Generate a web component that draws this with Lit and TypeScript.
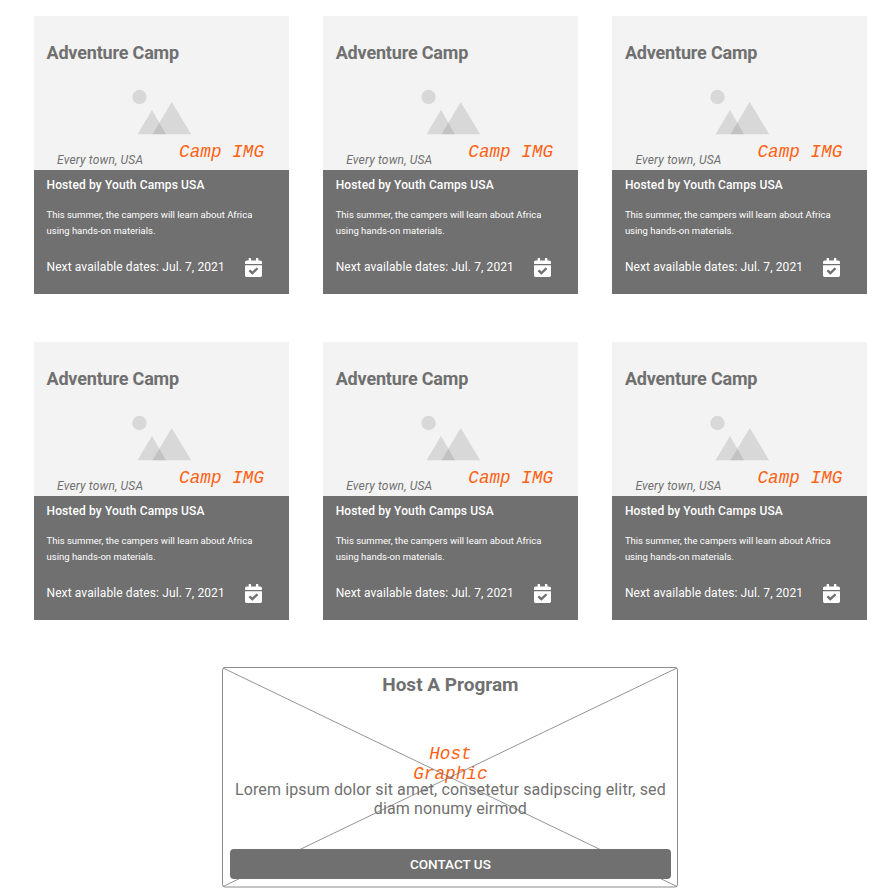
import { LitElement, html, css } from "lit";
import { customElement, property } from "lit/decorators.js";

interface Camp {
  name: string;
  town: string;
  host: string;
  summary: string;
  nextDate: string;
}

const camps: Camp[] = Array.from({ length: 6 }, () => ({
  name: "Adventure Camp",
  town: "Every town, USA",
  host: "Hosted by Youth Camps USA",
  summary: "This summer, the campers will learn about Africa using hands-on materials.",
  nextDate: "Jul. 7, 2021",
}));

@customElement("camp-card")
export class CampCard extends LitElement {
  @property({ attribute: false }) camp!: Camp;

  static styles = css`
    :host {
      display: flex;
      flex-direction: column;
      height: 278px;
      color: #fff;
    }
    .cover {
      box-sizing: border-box;
      height: 154.4px;
      padding: 26px 12.5px 0;
      background: #f3f3f3;
      color: #707070;
    }
    .name {
      margin: 0;
      font-size: 18px;
      line-height: 22px;
      font-weight: 700;
      letter-spacing: -0.18px;
    }
    .picture {
      display: block;
      width: 60px;
      height: 46px;
      margin: 25px 0 0 85.5px;
    }
    .caption {
      display: flex;
      align-items: flex-start;
      justify-content: space-between;
      padding: 7px 12.5px 0 10.5px;
      white-space: nowrap;
    }
    .town {
      margin-top: 10px;
      font-size: 12px;
      line-height: 16px;
      font-style: italic;
      letter-spacing: 0.18px;
    }
    .label {
      font: italic 17.7px/20px "Courier New", "Liberation Mono", monospace;
      color: #ff6213;
    }
    .details {
      box-sizing: border-box;
      flex: 1;
      padding: 6.6px 12.5px 0;
      background: #707070;
    }
    .host {
      margin: 0;
      font-size: 12px;
      line-height: 16px;
      font-weight: 500;
      letter-spacing: 0.12px;
    }
    .summary {
      margin: 13.9px 0 0;
      width: 215px;
      font-size: 9.5px;
      line-height: 16px;
    }
    .dates {
      display: flex;
      align-items: center;
      justify-content: space-between;
      margin: 18px 14.5px 0 0;
      font-size: 12px;
      line-height: 21px;
      letter-spacing: 0.1px;
      white-space: nowrap;
    }
    .calendar {
      display: block;
      width: 17px;
      height: 19px;
    }
  `;

  render() {
    return html`
      <section class="cover">
        <h2 class="name">${this.camp.name}</h2>
        <svg class="picture" viewBox="0 0 60 46" fill="#707070">
          <circle cx="7.5" cy="8" r="7.2" fill-opacity=".2" />
          <path d="M5.5 45.2 20 21 34 45.2Z" fill-opacity=".2" />
          <path d="M20.5 45.2 39.7 13 59.2 45.2Z" fill-opacity=".2" />
        </svg>
        <div class="caption">
          <span class="town">${this.camp.town}</span>
          <span class="label">Camp IMG</span>
        </div>
      </section>
      <section class="details">
        <h3 class="host">${this.camp.host}</h3>
        <p class="summary">${this.camp.summary}</p>
        <div class="dates">
          <span>Next available dates: ${this.camp.nextDate}</span>
          <svg class="calendar" viewBox="0 0 448 512" preserveAspectRatio="none" fill="#fff">
            <path
              d="M436 160H12c-6.627 0-12-5.373-12-12v-36c0-26.510 21.490-48 48-48h48V12c0-6.627 5.373-12 12-12h40c6.627 0 12 5.373 12 12v52h128V12c0-6.627 5.373-12 12-12h40c6.627 0 12 5.373 12 12v52h48c26.510 0 48 21.490 48 48v36c0 6.627-5.373 12-12 12zM12 192h424c6.627 0 12 5.373 12 12v260c0 26.510-21.490 48-48 48H48c-26.510 0-48-21.490-48-48V204c0-6.627 5.373-12 12-12zm333.296 95.947-28.169-28.398c-4.667-4.705-12.265-4.736-16.970-.068L194.120 364.665l-45.980-46.352c-4.667-4.705-12.266-4.736-16.971-.068l-28.397 28.170c-4.705 4.667-4.736 12.265-.068 16.970l82.601 83.269c4.667 4.705 12.265 4.736 16.970.068l142.953-141.805c4.705-4.667 4.736-12.265.068-16.970z"
            />
          </svg>
        </div>
      </section>
    `;
  }
}

@customElement("host-panel")
export class HostPanel extends LitElement {
  static styles = css`
    :host {
      position: relative;
      box-sizing: border-box;
      display: flex;
      flex-direction: column;
      width: 456px;
      height: 220.5px;
      padding: 7px 7.5px 9px;
      color: #707070;
      text-align: center;
    }
    .cross {
      position: absolute;
      inset: 0;
      width: 100%;
      height: 100%;
    }
    .title {
      margin: 0;
      font-size: 19px;
      line-height: 22px;
      font-weight: 700;
    }
    .label {
      width: 80px;
      margin: 48px auto 0;
      font: italic 17.7px/20px "Courier New", "Liberation Mono", monospace;
      color: #ff6213;
    }
    .text {
      margin: -4px -2px 0;
      font-size: 16px;
      line-height: 19px;
      letter-spacing: 0.13px;
    }
    .contact {
      position: relative;
      height: 29.5px;
      margin: auto 0 0;
      border: 0;
      border-radius: 4px;
      background: #707070;
      color: #fff;
      font: 500 13.5px/29px Roboto, sans-serif;
      padding: 0;
    }
  `;

  render() {
    return html`
      <svg class="cross" viewBox="0 0 456 221" preserveAspectRatio="none" fill="none" stroke="#707070">
        <rect x=".5" y=".5" width="455" height="220" rx="2.5" stroke-width=".8" />
        <path d="M1 1 455 220M455 1 1 220" stroke-width=".75" />
      </svg>
      <h2 class="title">Host A Program</h2>
      <div class="label">Host Graphic</div>
      <p class="text">Lorem ipsum dolor sit amet, consetetur sadipscing elitr, sed diam nonumy eirmod</p>
      <button class="contact">CONTACT US</button>
    `;
  }
}

@customElement("app-root")
export class AppRoot extends LitElement {
  static styles = css`
    :host {
      box-sizing: border-box;
      display: block;
      height: 894px;
      overflow: hidden;
      padding: 16px 21px 0 34px;
      background: #fff;
      font-family: Roboto, sans-serif;
    }
    .camps {
      display: grid;
      grid-template-columns: repeat(3, 255px);
      gap: 48px 34.2px;
    }
    .program {
      margin: 47.3px 0 0 188.4px;
    }
  `;

  render() {
    return html`
      <main class="camps">${camps.map((camp) => html`<camp-card .camp=${camp}></camp-card>`)}</main>
      <host-panel class="program"></host-panel>
    `;
  }
}
